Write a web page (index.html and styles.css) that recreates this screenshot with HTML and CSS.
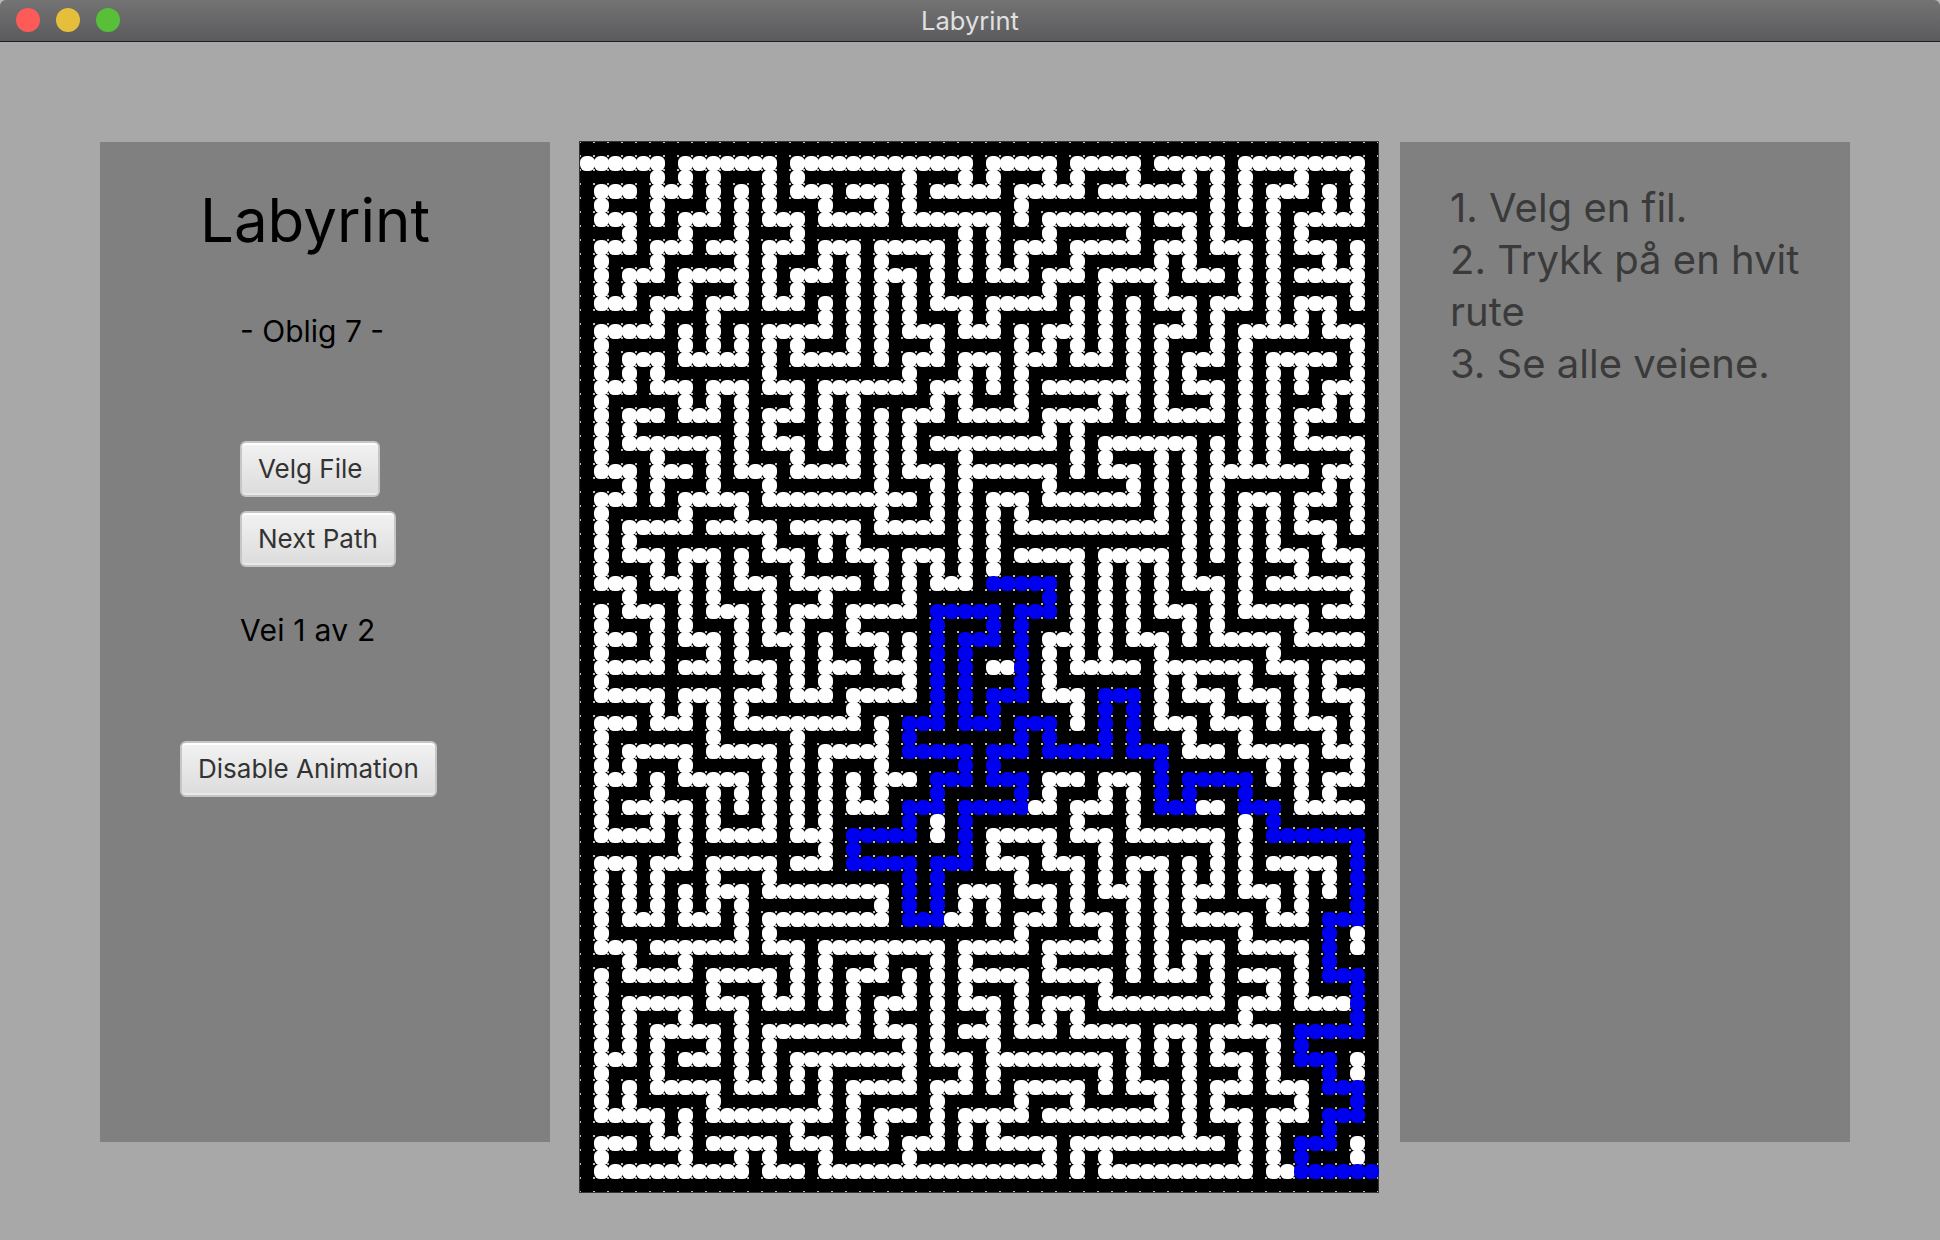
FILE: index.html
```html
<!DOCTYPE html>
<html lang="en">
<head>
  <meta charset="UTF-8" />
  <title>Labyrint</title>
  <link rel="stylesheet" href="styles.css">
</head>
<body>
  <div class="window">
    <div class="titlebar">
      <div class="lights">
        <span class="light red"></span>
        <span class="light yellow"></span>
        <span class="light green"></span>
      </div>
      <div class="title">Labyrint</div>
    </div>
    <div class="content">
      <div class="panel left">
        <h1>Labyrint</h1>
        <p class="sub">- Oblig 7 -</p>
        <button class="btn first">Velg File</button>
        <button class="btn">Next Path</button>
        <p class="status">Vei 1 av 2</p>
        <button class="btn wide">Disable Animation</button>
      </div>
      <div class="maze" id="maze"></div>
      <div class="panel right">
        <p class="help">1. Velg en fil.<br>2. Trykk på en hvit rute<br>3. Se alle veiene.</p>
      </div>
    </div>
  </div>
  <script src="maze.js"></script>
</body>
</html>
```
FILE: styles.css
```css
* { box-sizing: border-box; }
html, body { margin: 0; height: 100%; background: #b8b8b8; }
body { font-family: Inter, "Noto Sans", sans-serif; overflow: hidden; }
.window { height: 1240px; background: #a8a8a8; border-radius: 6px 6px 0 0; overflow: hidden; }

.titlebar { position: relative; height: 42px; background: linear-gradient(#737374, #5b5b5d); border-bottom: 1px solid #1f1f1f; display: flex; align-items: center; justify-content: center; }
.lights { position: absolute; left: 16px; top: 8px; display: flex; gap: 16px; }
.light { width: 24px; height: 24px; border-radius: 50%; }
.red { background: #fc5b57; }
.yellow { background: #e5bf3c; }
.green { background: #57c038; }
.title { color: #e0e0e0; font-size: 25.5px; }

.content { display: flex; align-items: flex-start; padding: 100px 0 0 100px; }
.panel { width: 450px; height: 1000px; background: #808080; }

.left { display: flex; flex-direction: column; align-items: flex-start; padding-left: 140px; }
.left h1 { margin: 42px 0 0 -40px; font-size: 60px; font-weight: 400; line-height: 72px; color: #000; }
.sub { margin: 57px 0 0 0; font-size: 30px; line-height: 36px; color: #000; }
.btn { height: 56px; padding: 0 16px 2px; font-family: inherit; font-size: 26px; color: #333; background: linear-gradient(#f2f2f2, #dcdcdc); border: 2px solid #c6c6c6; border-radius: 6px; box-shadow: inset 0 2px 0 #fff, inset 0 -2px 0 #e9e9e9; }
.btn.first { margin-top: 92px; margin-bottom: 14px; }
.status { margin: 45px 0 0 0; font-size: 30px; line-height: 36px; letter-spacing: 0.25px; color: #000; }
.btn.wide { margin: 93px 0 0 -60px; }

/* dots are the bit of background that shows between four round cells */
.maze { width: 800px; height: 1052px; margin: -1px 21px 0 29px; border: 1px solid #333; background: #000 radial-gradient(circle, #c0c0c0 0.7px, transparent 1.3px) -7px -7px / 14px 14px; display: grid; grid-template-columns: repeat(57, 14px); grid-auto-rows: 14px; }
.cell { width: 15px; height: 15px; margin: -0.5px; border-radius: 42%; }
.cell.white { background: #fff; }
.cell.blue { background: #0000f0; }

.right { padding: 40px 40px 0 50px; }
.help { margin: 0; font-size: 40px; line-height: 52px; color: #3a3a3a; }
```
FILE: maze.js
```js
// white = open squares, blue = the path being shown. ranges per row, row 0 and 74 are all wall
const white = [
  "",
  "0-5 7-13 15-27 29-33 35-39 41-45 47-55",
  "5 7 9 13 15 23 27 29 33 35 39 43 45 47 51 55",
  "1-3 5-7 9 11 13 15-17 19-21 23 25-29 31-35 37-43 45 47 49-51 53 55",
  "1 5 9 11 13 17 21 23 31 45 47 49 53 55",
  "1-3 5 7-9 11 13-15 17-21 23-29 31 33-39 41-43 45 47 49 51-55",
  "3 7 11 15 27 29 33 39 43 45 49 51",
  "1-3 5-7 9-11 13-15 17-19 21-25 27 29 31-33 35-39 41-43 45-47 49 51-53 55",
  "1 5 11 13 17 19 21 25 27 29 31 35 41 43 47 49 53 55",
  "1 3-5 7-11 13 15-17 19 21-23 25 27 29-31 33-35 37-41 43-45 47 49 51-55",
  "1 3 7 11 13 15 19 21 23 25 33 37 41 47 49 55",
  "1-3 5-7 9-11 13-15 17 19 21 23 25-27 29-33 35 37 39 41-43 45-47 49 51-53 55",
  "5 9 17 19 21 23 27 29 35 37 39 43 45 49 51 53",
  "1-5 7 9 11 13-17 19 21 23-25 27-29 31 33-35 37 39 41-43 45 47-51 53-55",
  "1 7 9 11 13 15 19 21 25 31 33 35 37 39 41 45 47 55",
  "1 3-5 7-11 13 15-19 21 23-25 27-29 31-33 35-37 39 41 43-45 47 49-53 55",
  "1 3 5 13 23 27 29 31 39 41 43 47 49 51 55",
  "1-3 5-7 9-11 13-15 17-23 25-27 29 31 33-39 41 43-45 47 49 51 53-55",
  "1 7 9 11 15 17 19 25 27 31 37 39 41 45 47 49 53 55",
  "1 3-5 7-9 11 13-15 17 19 21 23-25 27-31 33-37 39 41-45 47 49 51-53 55",
  "1 3 11 13 17 19 21 23 33 35 47 49 51",
  "1 3-9 11 13-15 17 19 21 23 25-33 35 37-43 45 47 49 51-55",
  "1 5 9 11 15 19 21 23 27 35 37 41 43 45 47 49 55",
  "1-3 5-7 9 11-13 15-19 21 23-25 27-33 35 37-39 41 43 45-51 53-55",
  "3 5 9 13 21 25 27 33 39 41 43 45 53 55",
  "1-3 5 7-11 13-23 25 27 29-31 33-39 41 43 45 47-49 51-53 55",
  "1 7 11 21 25 27 29 31 41 43 45 47 49 51 55",
  "1 3-7 9-13 15-19 21-25 27 29 31-41 43 45 47 49 51-53 55",
  "1 3 13 17 19 27 29 43 45 47 49 53",
  "1 3-5 7-9 11 13-15 17 19-21 23-25 27 29 31-35 37-41 43 45 47 49-51 53-55",
  "1 5 7 9 11 15 21 23 25 27 29 35 37 39 41 43 47 51 55",
  "1-3 5-7 9 11-13 15-19 21 23 25-27 35 37 39 41 43-45 47 49-55",
  "3 7 9 13 17 23 35 37 39 41 45 47 55",
  "1 3-5 7 9-11 13 15-17 19-23 35 37 39 41-43 45 47-51 53-55",
  "1 5 7 11 13 15 19 35 37 39 43 45 51",
  "1-3 5 7-9 11 13-15 17 19-21 23 33-35 37 39-41 43 45-49 51-55",
  "1 5 9 11 15 17 21 23 33 35 37 41 49",
  "1-5 7-9 11-13 15 17-19 21-23 29 30 33 35-39 41-47 49-51 53-55",
  "1 13 15 17 23 33 41 43 47 51 53",
  "1-5 7-9 11-13 15-17 19-23 33-35 41 43-45 47-49 51 53-55",
  "5 7 9 11 19 35 41 45 49 51 55",
  "1-3 5-7 9 11-19 21 35 41-43 45-47 49 51-53 55",
  "1 9 15 21 43 47 53 55",
  "1 3-7 9-13 15 17-21 43-45 47-51 53-55",
  "1 3 7 13 15 17 21 49 51 55",
  "1-3 5 7-11 13 15 17 19 21-23 33-35 37-39 49 51 53-55",
  "1 5 9 11 13 15 17 19 21 33 37 39 51 53",
  "1 3-7 9 11 13 15 17 19-21 32 33 35-37 39 44 45 51-55",
  "1 5 7 9 13 15 17 25 35 39 47",
  "1-5 7 9-13 15-17 25 29-33 35-37 39-45 47",
  "7 17 29 33 37 45 47",
  "1-3 5-7 9-13 15-17 29-31 33-35 37 39-41 43 45 47 49-53",
  "1 3 5 9 13 31 35 37 39 41 43 45 47 51 53",
  "1 3 5 7 9-11 13-21 27-29 31-33 35 37-39 41 43-45 47-49 51 53",
  "1 3 5 7 9 11 21 27 29 33 35 39 41 43 49 51",
  "1 3-5 7-9 11 13-21 26 27 29 31-33 35-37 39 41 43-47 49-51",
  "1 11 13 31 37 39 41 47 55",
  "1-3 5-11 13-15 17-25 27-31 33-37 39 41 43-45 47-51 55",
  "3 7 15 17 21 25 27 33 39 41 43 45 51",
  "1 3-7 9-13 15 17 19-21 23 25 27-31 33-37 39 41-43 45 47-49 51",
  "1 9 13 15 17 19 23 25 27 31 37 45 49 51",
  "1 3-7 9-11 13-15 17 19 21-23 25 27-29 31 33-35 37-45 47-49 51-54",
  "1 3 7 11 19 21 25 29 31 33 35 47",
  "1 3 5-9 11 13-19 21-23 25 27-29 31-33 35-39 41-43 45-49",
  "1 3 5 9 11 13 23 25 29 39 41 43 45 49",
  "1-3 5 7-9 11 13 15-23 25-27 29-37 39 41 43 45-47 49 55",
  "1 5 11 13 15 17 23 27 29 37 39 43 47 49 55",
  "1 3 5-9 11-13 15 17 19-23 25-27 29 31-35 37 39-41 43 45-47 49-51",
  "1 3 9 17 19 25 31 35 41 43 45 51",
  "1-5 7 9-17 19 21-23 25 27-31 33-41 43 45-47 49-51",
  "5 7 15 19 21 25 27 29 43 47 49",
  "1-3 5-7 9-13 15-17 19-21 23-25 27 29-33 35-45 47 49 55",
  "1 7 11 13 17 23 33 35 37 47 49 55",
  "1-11 13-15 17-33 35 37-47 49 50",
  ""
];

const blue = {
  31: "29-33", 32: "33", 33: "25-29 31-33", 34: "25 29 31", 35: "25 27-29 31", 36: "25 27 31",
  37: "25 27 31", 38: "25 27 31", 39: "25 27 29-31 37-39", 40: "25 27 29 37 39",
  41: "23-25 27-29 31-33 37 39", 42: "23 31 33 37 39", 43: "23-27 29-31 33-37 39-41",
  44: "27 29 41", 45: "25-27 29-31 41 43-47", 46: "25 31 41 43 47",
  47: "23-25 27-31 41-43 47-49", 48: "23 27 49", 49: "19-23 27 49-55", 50: "19 27 55",
  51: "19-23 25-27 55", 52: "23 25 55", 53: "23 25 55", 54: "23 25 55", 55: "23-25 53-55",
  56: "53", 57: "53", 58: "53", 59: "53-55", 60: "55", 61: "55", 62: "55", 63: "51-55",
  64: "51", 65: "51-53", 66: "53", 67: "53-55", 68: "55", 69: "53-55", 70: "53",
  71: "51-53", 72: "51", 73: "51-56"
};

function expand(ranges) {
  const cols = new Set();
  (ranges || "").split(" ").filter(Boolean).forEach(part => {
    const [a, b] = part.split("-").map(Number);
    for (let c = a; c <= (b === undefined ? a : b); c++) cols.add(c);
  });
  return cols;
}

const maze = document.getElementById("maze");
white.forEach((ranges, r) => {
  const open = expand(ranges);
  const path = expand(blue[r]);
  for (let c = 0; c < 57; c++) {
    const cell = document.createElement("div");
    cell.className = "cell" + (path.has(c) ? " blue" : open.has(c) ? " white" : "");
    maze.appendChild(cell);
  }
});
```
